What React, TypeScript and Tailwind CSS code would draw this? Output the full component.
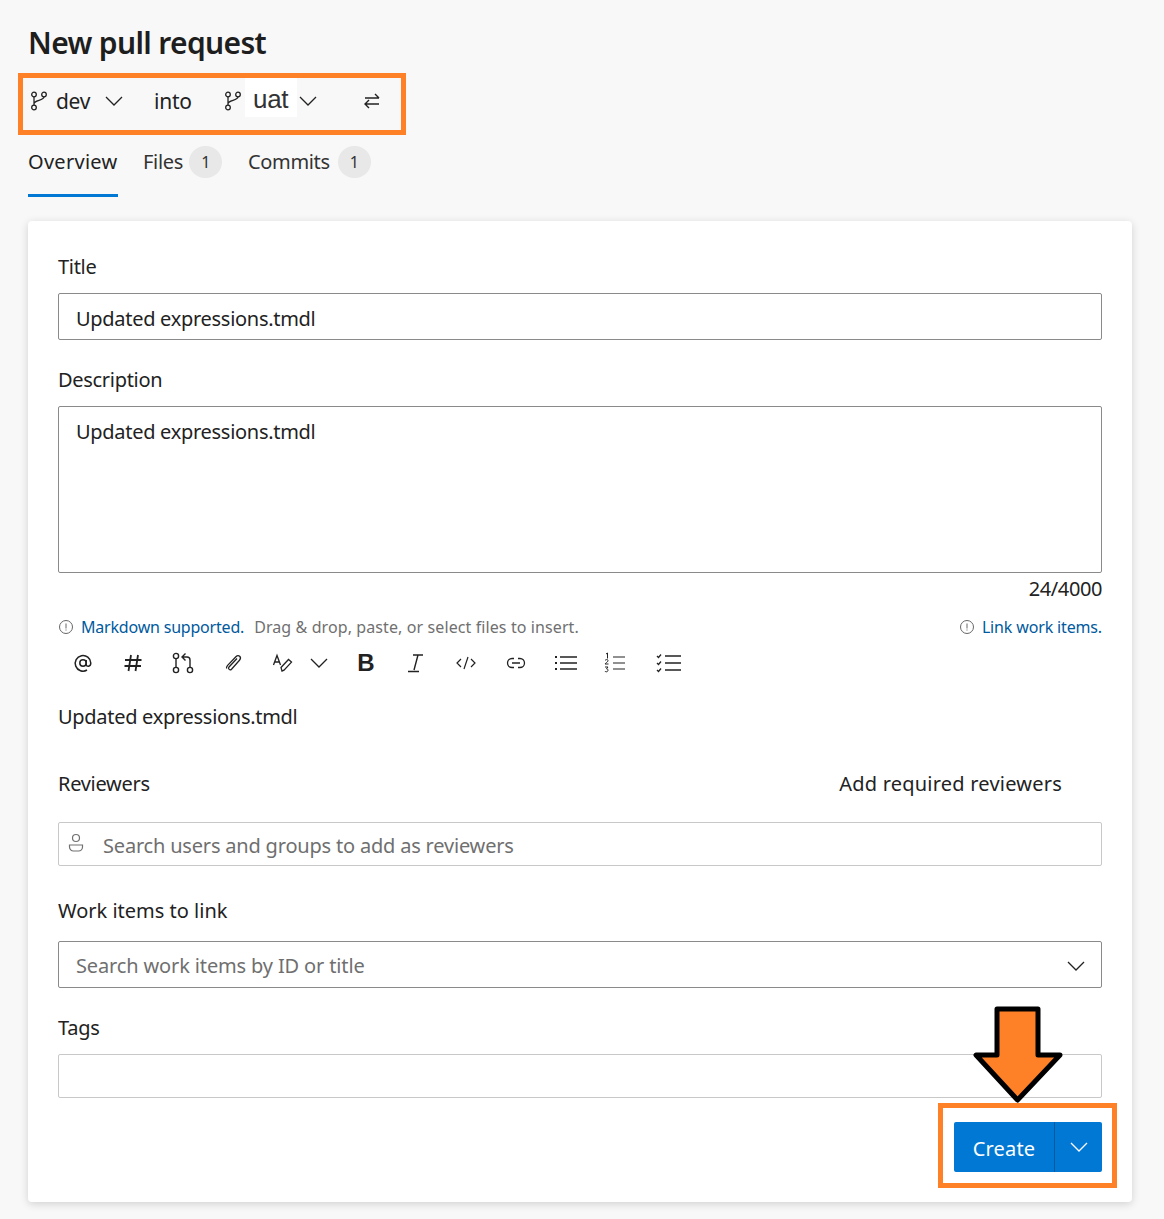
import React from "react";

const Chevron = ({ className = "" }: { className?: string }) => (
  <svg viewBox="0 0 18 10" className={className} fill="none" stroke="currentColor" strokeWidth="1.3">
    <path d="M1 1l8 8 8-8" />
  </svg>
);

const Branch = () => (
  <svg width="18" height="20" viewBox="0 0 18 20" fill="none" stroke="#222" strokeWidth="1.3">
    <circle cx="4" cy="3.500" r="2.300" />
    <circle cx="4" cy="16.500" r="2.300" />
    <circle cx="14" cy="3.500" r="2.300" />
    <path d="M4 5.800v8.400M14 5.800c0 4-10 3-10 7" />
  </svg>
);

const Info = () => (
  <svg width="16" height="16" viewBox="0 0 16 16" fill="none" stroke="#666" strokeWidth="1">
    <circle cx="8" cy="8" r="6.500" />
    <path d="M8 4.500v5M8 10.500v1" />
  </svg>
);

const Tool = ({ children, className = "" }: { children: React.ReactNode; className?: string }) => (
  <div className={`w-[50px] h-[24px] flex items-center justify-center text-[#222] ${className}`}>{children}</div>
);

const Label = ({ children, className = "" }: { children: React.ReactNode; className?: string }) => (
  <div className={`text-[20px] leading-[26px] text-[#222] tracking-[-0.3px] ${className}`}>{children}</div>
);

export default function App() {
  return (
    <div
      className="relative w-[1164px] h-[1219px] bg-[#f8f8f8] overflow-hidden text-[#222]"
      style={{ fontFamily: '"Noto Sans", "Open Sans", sans-serif' }}
    >
      <div className="pl-[28px] pr-[32px] pt-[22px]">
        <h1 className="text-[30px] leading-[42px] font-semibold text-[#1e1e1e] tracking-[-0.65px]">New pull request</h1>

        <div className="-ml-[10px] mt-[9px] w-[388px] h-[62px] border-[5px] border-[#ff8127] flex items-center pb-[4px] text-[21px] tracking-[-0.3px]">
          <div className="ml-[7px] -mt-[2px] flex items-center"><Branch /></div>
          <span className="ml-[8px]">dev</span>
          <Chevron className="ml-[15px] -mt-[2px] w-[18px] h-[10px]" />
          <span className="ml-[31px]">into</span>
          <div className="ml-[32px] -mt-[2px] flex items-center"><Branch /></div>
          <span
            className="ml-[3px] -mt-[10px] w-[52px] h-[39px] pt-[3px] leading-[36px] bg-white text-center text-[26px] text-[#333]"
            style={{ fontFamily: '"Liberation Sans", sans-serif' }}
          >
            uat
          </span>
          <Chevron className="ml-[2px] -mt-[2px] w-[18px] h-[10px]" />
          <svg className="ml-[47px] -mt-[2px]" width="16" height="16" viewBox="0 0 16 16" fill="none" stroke="#222" strokeWidth="1.4">
            <path d="M1 5h14M11 1l4 4M15 11H1M5 7l-4 4 4 4" />
          </svg>
        </div>

        <div className="mt-[10px] h-[52px] flex text-[20px]">
          <div className="w-[90px] h-[52px] border-b-[3px] border-[#0078d4] pt-[2px] leading-[30px] tracking-[0.28px] text-[#222] whitespace-nowrap">Overview</div>
          <div className="ml-[25px] flex items-start pt-[2px] leading-[30px] tracking-[-0.3px] text-[#333]">
            Files
            <span className="ml-[6px] -mt-[1px] w-[33px] h-[32px] rounded-full bg-[#e8e8e8] text-[16px] flex items-center justify-center">1</span>
          </div>
          <div className="ml-[26px] flex items-start pt-[2px] leading-[30px] tracking-[-0.35px] text-[#333]">
            Commits
            <span className="ml-[8px] -mt-[1px] w-[33px] h-[32px] rounded-full bg-[#e8e8e8] text-[16px] flex items-center justify-center">1</span>
          </div>
        </div>

        <div className="mt-[24px] w-[1104px] h-[981px] bg-white rounded-[4px] shadow-[0_2px_8px_rgba(0,0,0,0.16)] px-[30px] pt-[33px]">
          <Label>Title</Label>
          <div className="mt-[13px] h-[47px] border border-[#8a8a8a] rounded-[2px] pl-[17px] pt-[4px] flex items-center text-[20px] tracking-[-0.29px]">
            Updated expressions.tmdl
          </div>
          <Label className="mt-[27px]">Description</Label>
          <div className="mt-[13px] h-[167px] border border-[#8a8a8a] rounded-[2px] pl-[17px] pt-[10px] text-[20px] leading-[30px] tracking-[-0.29px]">
            Updated expressions.tmdl
          </div>
          <div className="h-[32px] flex items-center justify-end text-[20px] tracking-[-0.4px]">24/4000</div>

          <div className="mt-[8px] h-[28px] flex items-center justify-between text-[16px] text-[#707070]">
            <div className="flex items-center">
              <Info />
              <span className="ml-[7px] text-[#005a9e] tracking-[-0.2px]">Markdown supported.</span>
              <span className="ml-[10px] tracking-[0.1px]">Drag &amp; drop, paste, or select files to insert.</span>
            </div>
            <div className="flex items-center">
              <Info />
              <span className="ml-[7px] text-[#005a9e] tracking-[-0.15px]">Link work items.</span>
            </div>
          </div>

          <div className="mt-[10px] flex items-center">
            <Tool>
              <svg width="20" height="20" viewBox="0 0 20 20" fill="none" stroke="currentColor" strokeWidth="1.5">
                <circle cx="10" cy="10" r="3.200" />
                <path d="M13.200 7v4.500c0 2.500 4.600 2.500 4.600-1.500A7.800 7.800 0 1 0 14 17" />
              </svg>
            </Tool>
            <Tool>
              <svg width="20" height="20" viewBox="0 0 20 20" fill="none" stroke="currentColor" strokeWidth="1.8">
                <path d="M8 2L5.500 18M15 2l-2.500 16M2 7h16.500M1.500 13H18" />
              </svg>
            </Tool>
            <Tool>
              <svg width="24" height="22" viewBox="0 0 24 22" fill="none" stroke="currentColor" strokeWidth="1.4">
                <circle cx="5" cy="4" r="2.600" />
                <circle cx="5" cy="18" r="2.600" />
                <circle cx="19" cy="18" r="2.600" />
                <path d="M5 6.600v8.800M19 15.400V8c0-2-1-3-3-3h-4M14.500 1.500L11 5l3.500 3.500" />
              </svg>
            </Tool>
            <Tool>
              <svg width="20" height="20" viewBox="0 0 20 20" fill="none" stroke="currentColor" strokeWidth="1.3">
                <path d="M14 5.500l-8 8.500c-1.500 1.800 1 3.800 2.500 2.200l8-9c2.600-3-1-6.200-3.600-3.400L4.600 12.400c-1 1.200-1.400 2.200-1 3.200" />
              </svg>
            </Tool>
            <Tool>
              <svg width="22" height="20" viewBox="0 0 22 20" fill="none" stroke="currentColor" strokeWidth="1.3">
                <path d="M1.500 12L5 2.500 8.500 12M2.800 9h4.600" />
                <path d="M10 18l-1-3.500 7.500-8 3 2.600-7.500 8z" />
              </svg>
            </Tool>
            <div className="-ml-[2px] w-[26px] flex justify-center text-[#222]">
              <Chevron className="w-[18px] h-[10px]" />
            </div>
            <div className="ml-[9px] flex">
              <Tool>
                <span className="text-[24px] font-bold leading-none" style={{ fontFamily: '"Liberation Sans", sans-serif' }}>B</span>
              </Tool>
              <Tool>
                <svg width="18" height="20" viewBox="0 0 18 20" fill="none" stroke="currentColor" strokeWidth="1.4">
                  <path d="M6 2h10M11 2L7 17M1 18.500h11" />
                </svg>
              </Tool>
              <Tool>
                <svg width="20" height="14" viewBox="0 0 20 14" fill="none" stroke="currentColor" strokeWidth="1.2">
                  <path d="M5 3L1 7l4 4M15 3l4 4-4 4M12 1L8 13" />
                </svg>
              </Tool>
              <Tool>
                <svg width="20" height="14" viewBox="0 0 20 14" fill="none" stroke="currentColor" strokeWidth="1.3">
                  <path d="M8 2.500H6a4.500 4.500 0 0 0 0 9h2M12 2.500h2a4.500 4.500 0 0 1 0 9h-2M6 7h8" />
                </svg>
              </Tool>
              <Tool>
                <svg width="24" height="18" viewBox="0 0 24 18" fill="none" stroke="currentColor" strokeWidth="1.5">
                  <path d="M6 3h17M6 9h17M6 15h17" />
                  <path d="M1 3h2M1 9h2M1 15h2" strokeWidth="2" />
                </svg>
              </Tool>
              <Tool>
                <svg width="24" height="22" viewBox="0 0 24 22" fill="none" stroke="currentColor" strokeWidth="1.2">
                  <path d="M9 5h12M9 11h12M9 17h12" />
                  <path d="M2 2l1.500-1v5.500M1 8.500c1-1.500 3.500-1 3 .5-.3 1-2.500 2-3 3h3.500M1 15h3l-1.500 1.800c2-.2 2 3.200-.2 3-.7 0-1.300-.3-1.300-.8" strokeWidth="1" />
                </svg>
              </Tool>
              <Tool className="ml-[3px]">
                <svg width="26" height="20" viewBox="0 0 26 20" fill="none" stroke="currentColor" strokeWidth="1.3">
                  <path d="M9 3h16M9 10h16M9 17h16" />
                  <path d="M1 3l1.500 1.500L5 1.500M1 10l1.500 1.500L5 8.500M1 17l1.500 1.500L5 15.500" />
                </svg>
              </Tool>
            </div>
          </div>

          <div className="mt-[27px] h-[30px] text-[20px] leading-[30px] tracking-[-0.29px]">Updated expressions.tmdl</div>

          <div className="mt-[39px] flex items-center justify-between">
            <Label>Reviewers</Label>
            <div className="mr-[40px] text-[20px] leading-[26px] tracking-[0.22px] text-[#222]">Add required reviewers</div>
          </div>

          <div className="mt-[25px] h-[44px] border border-[#c8c8c8] rounded-[2px] pt-[3px] flex items-center text-[20px] tracking-[-0.19px] text-[#6f6f6f]">
            <svg className="ml-[9px] -mt-[7px]" width="17" height="22" viewBox="0 0 17 22" fill="none" stroke="#707070" strokeWidth="1.2">
              <circle cx="8" cy="7" r="3.500" />
              <path d="M1.500 14h13v2a4 4 0 0 1-4 4h-5a4 4 0 0 1-4-4z" />
            </svg>
            <span className="ml-[18px]">Search users and groups to add as reviewers</span>
          </div>

          <Label className="mt-[32px] tracking-[0px]">Work items to link</Label>
          <div className="mt-[17px] h-[47px] border border-[#8a8a8a] rounded-[2px] flex items-center justify-between pl-[17px] pr-[16px] pt-[2px] text-[20px] tracking-[-0.14px] text-[#6f6f6f]">
            <span>Search work items by ID or title</span>
            <Chevron className="w-[18px] h-[10px] text-[#222]" />
          </div>

          <Label className="mt-[27px]">Tags</Label>
          <div className="mt-[13px] h-[44px] border border-[#c8c8c8] rounded-[2px]" />

          <div className="mt-[5px] flex justify-end">
            <div className="-mr-[15px] w-[179px] h-[85px] border-[5px] border-[#ff8127] flex items-center justify-start pl-[11px] pt-[2px]">
              <div className="w-[148px] h-[50px] rounded-[2px] bg-[#0078d4] text-white flex items-stretch">
                <div className="w-[100px] flex items-center justify-center pt-[5px] text-[20px] tracking-[0.2px]">Create</div>
                <div className="w-px bg-[#005a9e]" />
                <div className="flex-1 flex items-center justify-center">
                  <Chevron className="w-[18px] h-[10px]" />
                </div>
              </div>
            </div>
          </div>
        </div>
      </div>

      <svg className="absolute left-[972px] top-[1005px]" width="92" height="100" viewBox="0 0 92 100">
        <path d="M25 4h41v46h22L45.500 95 4 50h21z" fill="#ff8127" stroke="#000" strokeWidth="5" strokeLinejoin="round" />
      </svg>
    </div>
  );
}
